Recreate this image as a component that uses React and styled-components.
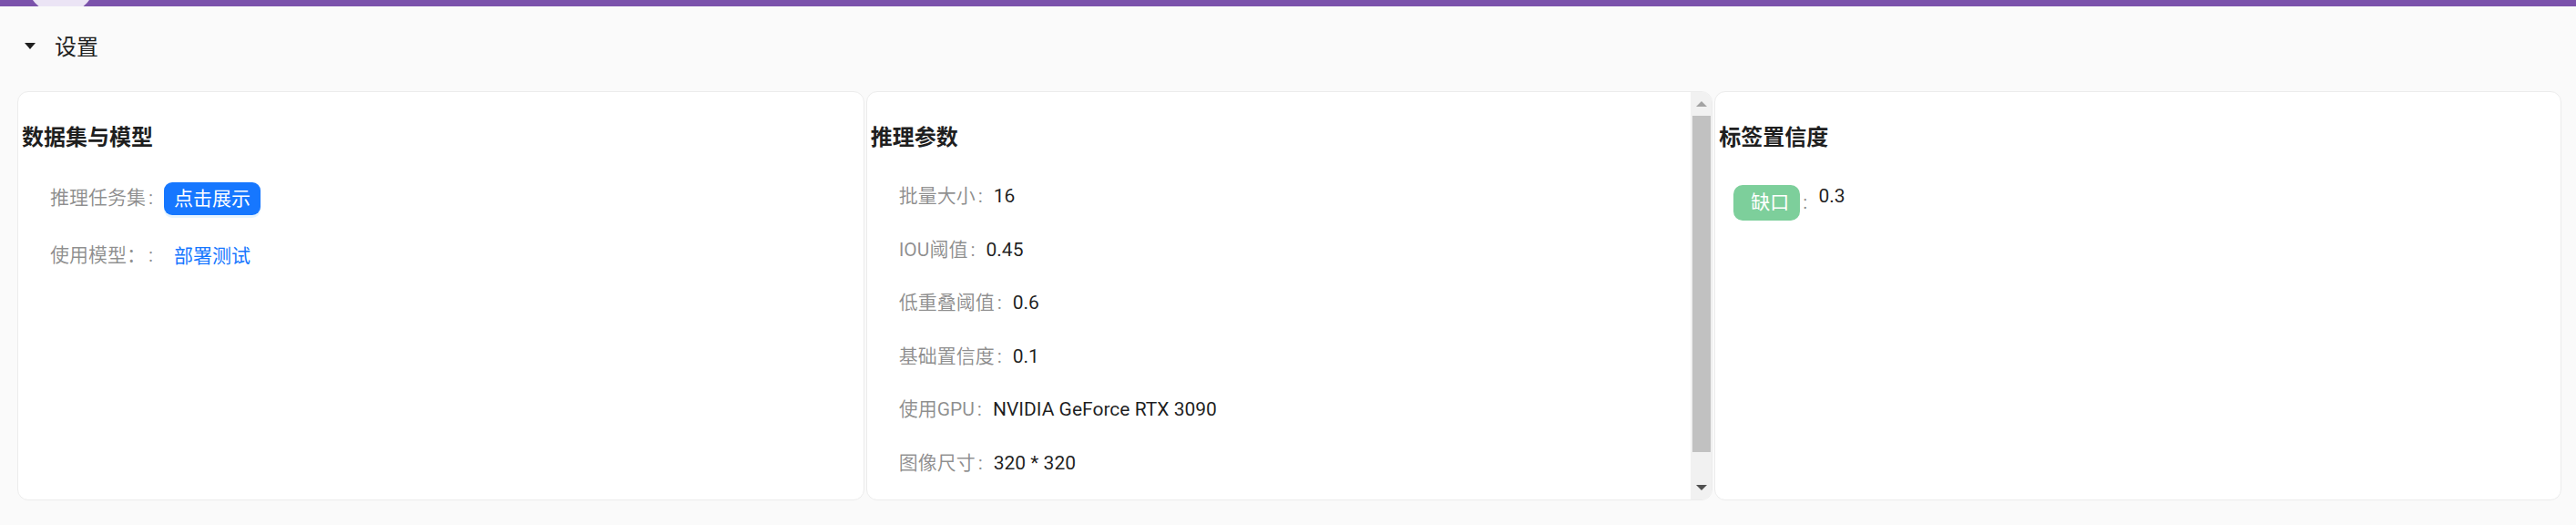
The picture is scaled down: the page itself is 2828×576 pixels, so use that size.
import React from "react";
import styled, { createGlobalStyle } from "styled-components";

const Global = createGlobalStyle`
  html, body { margin: 0; padding: 0; background: #fafafa; }
  body { font-family: Roboto, "Noto Sans CJK SC", sans-serif; color: rgba(0,0,0,0.88); }
  * { box-sizing: border-box; }
`;

const Page = styled.div`
  min-height: 576px;
  background: #fafafa;
`;

const TopBar = styled.div`
  position: relative;
  height: 7px;
  background: #7b52ab;
  overflow: hidden;
`;

const Blob = styled.div`
  position: absolute;
  left: 29px;
  top: -60px;
  width: 76px;
  height: 76px;
  border-radius: 50%;
  background: #ebe4f5;
`;

const SectionHeader = styled.div`
  height: 90px;
  display: flex;
  align-items: center;
  padding-left: 27px;
`;

const Caret = styled.span`
  width: 0;
  height: 0;
  border-left: 6px solid transparent;
  border-right: 6px solid transparent;
  border-top: 7px solid #1f1f1f;
  margin-right: 21px;
  margin-top: -3px;
`;

const HeaderText = styled.span`
  font-size: 24px;
  line-height: 36px;
  color: #1f1f1f;
`;

const CardGrid = styled.div`
  display: grid;
  grid-template-columns: repeat(3, 1fr);
  gap: 2px;
  padding: 3px 16px 0 19px;
`;

const Card = styled.div`
  height: 449px;
  display: flex;
  background: #fff;
  border: 1px solid #ececec;
  border-radius: 12px;
  overflow: hidden;
`;

const CardBody = styled.div`
  flex: 1;
  min-width: 0;
  padding: 32px 4px 0;
  overflow: hidden;
`;

const ScrollRail = styled.div`
  width: 23px;
  flex: none;
  display: flex;
  flex-direction: column;
  background: #f1f1f1;
`;

const ArrowButton = styled.div`
  height: 26px;
  flex: none;
  display: flex;
  align-items: center;
  justify-content: center;
  color: ${(p) => (p.$disabled ? "#a3a3a3" : "#505050")};
`;

const Track = styled.div`
  flex: 1;
  padding: 0 1px 0 2px;
`;

const Thumb = styled.div`
  height: ${(p) => p.$ratio * 100}%;
  background: #c1c1c1;
`;

const CardTitle = styled.h3`
  margin: 0;
  font-size: 24px;
  line-height: 36px;
  font-weight: 700;
  color: #1f1f1f;
`;

const Rows = styled.div`
  display: flex;
  flex-direction: column;
  gap: 27px;
  margin-top: 31px;
  padding-left: ${(p) => p.$indent}px;
`;

const Row = styled.div`
  display: flex;
  align-items: ${(p) => p.$align || "center"};
  font-size: 21px;
  line-height: 31.5px;
`;

const Label = styled.span`
  display: inline-flex;
  align-items: baseline;
  color: rgba(0, 0, 0, 0.45);
  white-space: nowrap;
  &::after {
    content: ":";
    margin: 0 12px 0 3px;
  }
`;

const Value = styled.span`
  color: rgba(0, 0, 0, 0.88);
  white-space: nowrap;
`;

const Button = styled.button`
  height: 36px;
  padding: 0 11px;
  border: none;
  border-radius: 9px;
  font-family: inherit;
  font-size: 21px;
  line-height: 36px;
  cursor: pointer;
  background: ${(p) => (p.$link ? "transparent" : "#1677ff")};
  color: ${(p) => (p.$link ? "#1677ff" : "#fff")};
  box-shadow: ${(p) => (p.$link ? "none" : "0 3px 0 rgba(5, 145, 255, 0.1)")};
`;

const Tag = styled.span`
  display: inline-block;
  height: 39px;
  line-height: 39px;
  margin-top: 3px;
  padding: 0 12px 0 19px;
  border-radius: 10px;
  background: #7dcf9b;
  color: #fff;
`;

const Arrow = ({ up }) => (
  <svg width="12" height="6" viewBox="0 0 12 6">
    <path d={up ? "M0 6 L6 0 L12 6 Z" : "M0 0 L12 0 L6 6 Z"} fill="currentColor" />
  </svg>
);

const params = [
  ["批量大小", "16"],
  ["IOU阈值", "0.45"],
  ["低重叠阈值", "0.6"],
  ["基础置信度", "0.1"],
  ["使用GPU", "NVIDIA GeForce RTX 3090"],
  ["图像尺寸", "320 * 320"],
];

export default function App() {
  return (
    <Page>
      <Global />
      <TopBar>
        <Blob />
      </TopBar>
      <SectionHeader>
        <Caret />
        <HeaderText>设置</HeaderText>
      </SectionHeader>
      <CardGrid>
        <Card>
          <CardBody>
            <CardTitle>数据集与模型</CardTitle>
            <Rows $indent={31}>
              <Row>
                <Label>推理任务集</Label>
                <Button>点击展示</Button>
              </Row>
              <Row>
                <Label>使用模型：</Label>
                <Button $link>部署测试</Button>
              </Row>
            </Rows>
          </CardBody>
        </Card>
        <Card>
          <CardBody>
            <CardTitle>推理参数</CardTitle>
            <Rows $indent={31}>
              {params.map(([k, v]) => (
                <Row key={k}>
                  <Label>{k}</Label>
                  <Value>{v}</Value>
                </Row>
              ))}
            </Rows>
          </CardBody>
          <ScrollRail>
            <ArrowButton $disabled>
              <Arrow up />
            </ArrowButton>
            <Track>
              <Thumb $ratio={0.934} />
            </Track>
            <ArrowButton>
              <Arrow />
            </ArrowButton>
          </ScrollRail>
        </Card>
        <Card>
          <CardBody>
            <CardTitle>标签置信度</CardTitle>
            <Rows $indent={16}>
              <Row $align="flex-start">
                <Label>
                  <Tag>缺口</Tag>
                </Label>
                <Value>0.3</Value>
              </Row>
            </Rows>
          </CardBody>
        </Card>
      </CardGrid>
    </Page>
  );
}
